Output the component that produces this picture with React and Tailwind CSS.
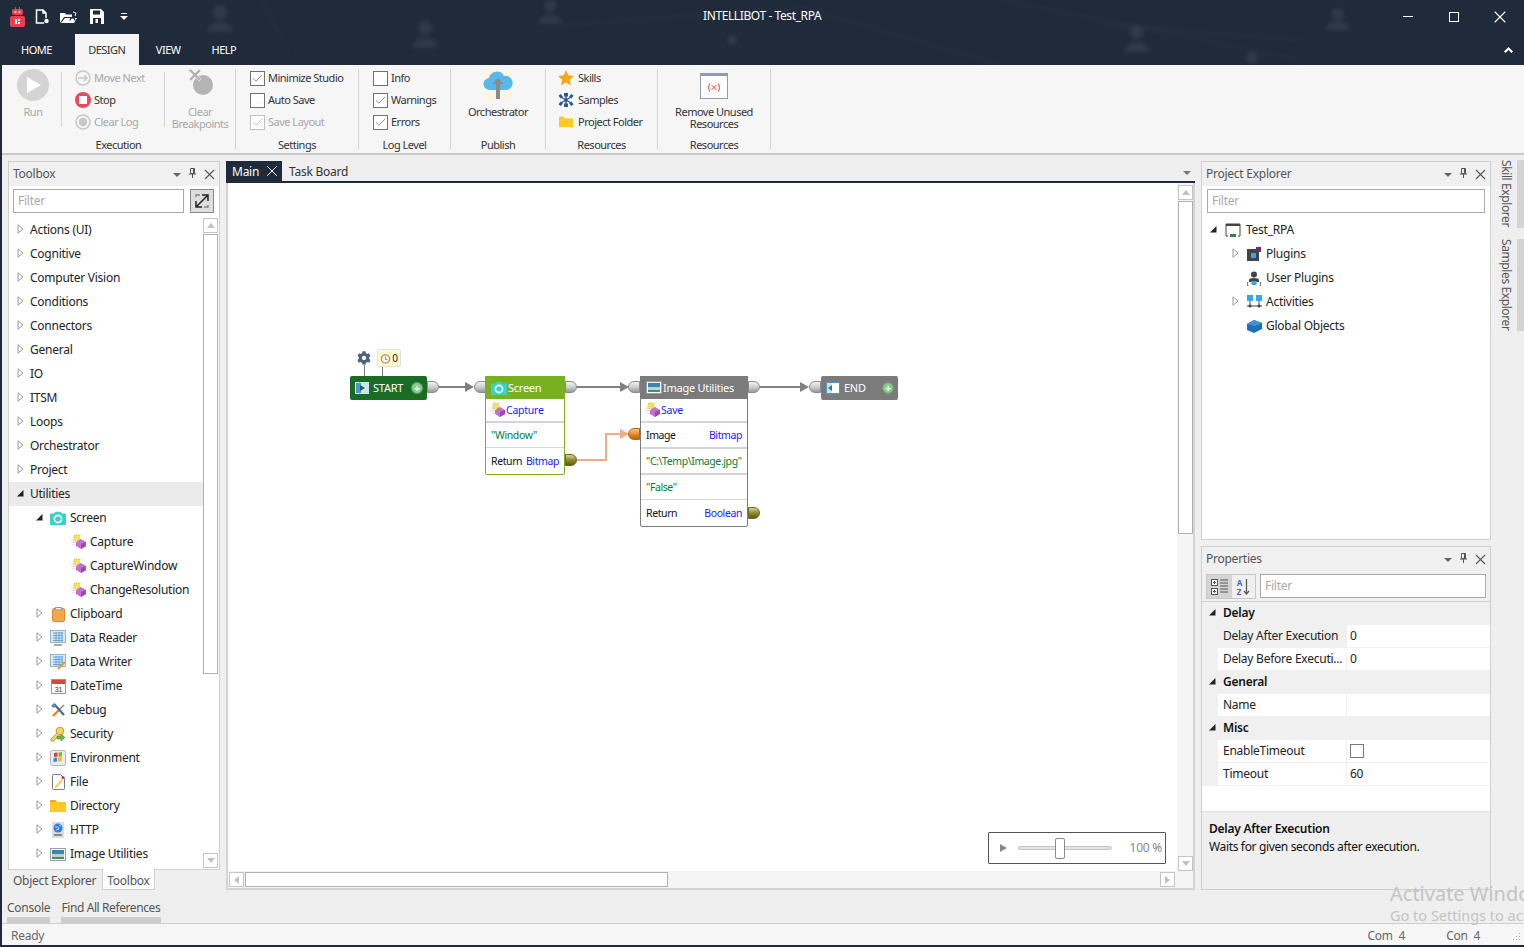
import { Check, X } from "lucide-react";
import { FaCog } from "react-icons/fa";

const TriOpen = () => (
  <svg width="7" height="10" viewBox="0 0 7 10" className="shrink-0 -mt-[2px]">
    <path d="M1 .8 6 5 1 9.2Z" fill="#fff" stroke="#9a9a9a" />
  </svg>
);
const TriDown = () => (
  <svg width="8" height="8" viewBox="0 0 8 8" className="shrink-0 -mt-[2px]">
    <path d="M7.5 1V7.5H1Z" fill="#222" />
  </svg>
);

const Spark = () => (
  <svg width="16" height="16" viewBox="0 0 16 16">
    <path d="M0 6h5M0 8.5h5M1 11h5" stroke="#ddd" />
    <rect x="3" y="1" width="6" height="6" fill="#f5df6b" stroke="#e3c43d" strokeDasharray="1 1" />
    <path d="M5 8 10 5l5 3v4l-5 3-5-3Z" fill="#c46fd0" />
    <path d="M10 10l5-2v4l-5 3Z" fill="#9b4bac" />
  </svg>
);
const ScreenIcon = ({ s = 16 }) => (
  <svg width={s} height={s * 0.875} viewBox="0 0 16 14">
    <path d="M1 2.5h3L5.5.7h5L12 2.5h3a1 1 0 0 1 1 1V13a1 1 0 0 1-1 1H1a1 1 0 0 1-1-1V3.500a1 1 0 0 1 1-1Z" fill="#3bd0c8" />
    <circle cx="8" cy="8" r="3.600" fill="none" stroke="#fff" strokeWidth="1.600" />
  </svg>
);
const ImageIcon = () => (
  <svg width="16" height="13" viewBox="0 0 16 13">
    <rect x=".5" y=".5" width="15" height="12" fill="#fff" stroke="#8ea0b0" />
    <rect x="2" y="2" width="12" height="4" fill="#3d83b5" />
    <rect x="2" y="6" width="12" height="3" fill="#b7d5c8" />
    <rect x="2" y="9" width="12" height="2" fill="#4c8a68" />
  </svg>
);
const Clipboard = () => (
  <svg width="13" height="15" viewBox="0 0 13 15">
    <rect x=".5" y="1.500" width="12" height="13" rx="1.500" fill="#f3a64a" stroke="#d98a2c" />
    <rect x="3.500" y=".5" width="6" height="2.500" fill="#eee" stroke="#999" />
  </svg>
);
const Grid = ({ pen }) => (
  <svg width="16" height="16" viewBox="0 0 16 16">
    <rect x=".5" y=".5" width="15" height="12" fill="#d8e8f4" stroke="#9fb2c2" />
    <path d="M3 3h10M3 5.500h10M3 8h10M3 10.500h10M6 2v10M9 2v10M12 2v10" stroke="#5ba0d8" strokeWidth=".9" />
    {pen ? <path d="M8 15l7-7" stroke="#e0a020" strokeWidth="2" /> : <path d="M4 15h8" stroke="#aaa" strokeWidth="2" />}
  </svg>
);
const Cal = () => (
  <svg width="15" height="16" viewBox="0 0 15 16">
    <rect x=".5" y="1.500" width="14" height="14" fill="#fff" stroke="#999" />
    <rect x="1" y="2" width="13" height="4" fill="#d9463a" />
    <text x="7.500" y="13.500" fontSize="7" textAnchor="middle" fill="#333" fontFamily="Liberation Sans">31</text>
  </svg>
);
const Tools = () => (
  <svg width="15" height="15" viewBox="0 0 15 15">
    <path d="M2 13 9 6" stroke="#e08a1f" strokeWidth="2.400" />
    <path d="M9 6 13 2" stroke="#888" strokeWidth="1.400" />
    <path d="M3 1 13 12" stroke="#4b6a88" strokeWidth="2.200" />
    <path d="M0 3 3 0l2 3-2 2Z" fill="#6a86a0" />
  </svg>
);
const Keys = () => (
  <svg width="16" height="16" viewBox="0 0 16 16">
    <circle cx="10" cy="5" r="3.800" fill="#f2d36b" stroke="#c79a2e" />
    <path d="M7 7 1 13v2h3l1-2 2-1 2-2" fill="#f2d36b" stroke="#c79a2e" />
    <path d="M7 10h4V8l4 3.500L11 15v-2H7Z" fill="#6eb04a" stroke="#4a8a30" strokeWidth=".6" />
  </svg>
);
const Env = () => (
  <svg width="16" height="16" viewBox="0 0 16 16">
    <rect x=".5" y=".5" width="15" height="15" rx="2" fill="#e8ebef" stroke="#b5b5b5" />
    <path d="M4 3l3.500-.5v4L4 7Z" fill="#e33b2e" />
    <path d="M8.500 2.500 12 2v4.500l-3.500.3Z" fill="#7cbb2e" />
    <path d="M3.500 8 7 7.500v4L3.500 12Z" fill="#2f85e0" />
    <path d="M8 7.500l3.800-.3V11L8 11.500Z" fill="#f4b81f" />
  </svg>
);
const FileI = () => (
  <svg width="13" height="16" viewBox="0 0 13 16">
    <path d="M1.500.5h7l4 4v10a1 1 0 0 1-1 1h-10a1 1 0 0 1-1-1v-13a1 1 0 0 1 1-1Z" fill="#fff" stroke="#777" />
    <path d="M3 12.500 9.500 5l1.500 1.300-6.500 7.500L3 14Z" fill="#f4d03f" />
    <circle cx="11" cy="3.500" r="1.500" fill="#c2297c" />
  </svg>
);
const Dir = () => (
  <svg width="16" height="12" viewBox="0 0 16 12">
    <path d="M0 1a1 1 0 0 1 1-1h4l2 2h9v10H0Z" fill="#ffc91f" />
    <path d="M0 1a1 1 0 0 1 1-1h4l2 2H0Z" fill="#eda52a" />
  </svg>
);
const Http = () => (
  <svg width="12" height="16" viewBox="0 0 12 16">
    <rect width="12" height="16" fill="#dcdcdc" />
    <circle cx="6" cy="6" r="4.500" fill="#2f7fe0" />
    <path d="M3 5h3l1 2-3 1M7 3l2 1" stroke="#bcdcff" fill="none" />
    <rect x="2" y="12" width="8" height="2" fill="#888" />
  </svg>
);

const treeItems = [
  ["Actions (UI)"], ["Cognitive"], ["Computer Vision"], ["Conditions"], ["Connectors"], ["General"], ["IO"], ["ITSM"],
  ["Loops"], ["Orchestrator"], ["Project"],
];
const subItems = [
  ["Clipboard", <Clipboard />], ["Data Reader", <Grid />], ["Data Writer", <Grid pen />], ["DateTime", <Cal />],
  ["Debug", <Tools />], ["Security", <Keys />], ["Environment", <Env />], ["File", <FileI />], ["Directory", <Dir />],
  ["HTTP", <Http />], ["Image Utilities", <ImageIcon />],
];

const PanelHeader = ({ title }) => (
  <div className="h-[24px] shrink-0 flex items-center bg-[#f0f0f0] pl-[4px] text-[#555]">
    <span className="whitespace-nowrap">{title}</span>
    <div className="flex-1 h-[5px] mx-[9px] bg-[radial-gradient(#a8a8a8_0.6px,transparent_0.7px)] bg-[length:2px_2px]"></div>
    <svg width="8" height="4" viewBox="0 0 8 4" className="mr-[8px] mt-[2px]"><path d="M0 0h8L4 4Z" fill="#666" /></svg>
    <svg width="7" height="10" viewBox="0 0 7 10" className="-mt-[2px]" fill="none" stroke="#555"><path d="M1.500.5h4v5h-4ZM0 6h7M3.500 6v4M4.500 1v4" /></svg>
    <X size={17} className="text-[#555] ml-[5px] mr-[1px]" strokeWidth={1.5} />
  </div>
);

const Filter = ({ className }) => (
  <div className={"h-[24px] flex items-center bg-white border border-[#a9a9a9] pl-[4px] text-[#aaa] " + (className || "")}>Filter</div>
);

const ScrollBtn = ({ dir }) => {
  const p = { up: "M1 6 5 1l4 5Z", down: "M1 1h8L5 6Z", left: "M6 1v8L1 5Z", right: "M1 1v8l5-4Z" }[dir];
  return (
    <div className="w-[15px] h-[15px] shrink-0 border border-[#c4c4c4] bg-white flex items-center justify-center">
      <svg width="10" height="10" viewBox="0 0 10 10" className={dir === "up" || dir === "down" ? "mt-[2px]" : "ml-[2px]"}><path d={p} fill="#c0c0c0" /></svg>
    </div>
  );
};

const TreeRow = ({ indent, arrow, icon, children, active }) => (
  <div className={"h-[24px] flex items-center shrink-0 whitespace-nowrap text-[#222] " + (active ? "bg-[#ebebeb]" : "")}>
    <div className="flex items-center justify-center w-[8px] shrink-0" style={{ marginLeft: indent }}>{arrow}</div>
    {icon}
    <span>{children}</span>
  </div>
);

const Check14 = ({ checked, dim }) => (
  <div className={"w-[15px] h-[15px] shrink-0 border bg-white flex items-center justify-center " + (dim ? "border-[#c0c0c0]" : "border-[#707070]")}>
    {checked && <Check size={13} strokeWidth={1.4} className={dim ? "text-[#aaa]" : "text-[#666]"} />}
  </div>
);

const CheckRow = ({ label, checked, dim }) => (
  <div className="h-[18px] flex items-center gap-[3px] whitespace-nowrap">
    <Check14 checked={checked} dim={dim} />
    <span className={dim ? "text-[#a8a8a8]" : "text-[#333]"}>{label}</span>
  </div>
);

const Group = ({ w, label, className, children }) => (
  <div className="flex flex-col h-[80px] border-r border-[#d4d4d4] shrink-0" style={{ width: w }}>
    <div className={"h-[69px] " + (className || "")}>{children}</div>
    <div className="h-[11px] leading-[14px] text-center text-[#333]">{label}</div>
  </div>
);

const Pill = ({ side, tone = "gray" }) => {
  const bg = {
    gray: "from-[#f2f2f2] via-[#cfcfcf] to-[#9a9a9a] border-[#8a8a8a]",
    olive: "from-[#d8d39a] via-[#8f8a2c] to-[#5e5a14] border-[#6b6720]",
    orange: "from-[#f7c78f] via-[#ea8a20] to-[#b86510] border-[#b86510]",
  }[tone];
  return <div className={"w-[12px] h-[12px] border bg-gradient-to-b " + bg + (side === "r" ? " rounded-r-[6px]" : " rounded-l-[6px]")}></div>;
};

const Arrow = ({ color = "#808080" }) => (
  <svg width="9" height="10" viewBox="0 0 9 10"><path d="M0 0l9 5-9 5Z" fill={color} /></svg>
);

const Link = ({ w }) => (
  <div className="flex items-center h-[12px]">
    <div className="h-[2px] bg-[#808080]" style={{ width: w }}></div>
    <Arrow />
  </div>
);

const NodeRow = ({ h, left, right, thick, color = "text-[#111]" }) => (
  <div className={"flex items-center justify-between px-[5px] whitespace-nowrap text-[10.5px] tracking-[-0.4px] border-t " + (thick ? "border-t-2 border-[#d4d4d4] " : "border-[#d8d8d8] ") + color} style={{ height: h }}>
    <span>{left}</span>
    {right && <span className="text-[#1a1aff]">{right}</span>}
  </div>
);

const PlusDot = () => (
  <div className="w-[12px] h-[12px] rounded-full bg-[#8cc98c] border border-[#5da05d] flex items-center justify-center text-white font-bold text-[10px] leading-none">+</div>
);

const PropGroup = ({ children }) => (
  <div className="h-[23px] flex items-center bg-[#f0f0f0] font-semibold text-[#111] pb-[2px]">
    <div className="w-[21px] pl-[6px] flex items-center"><TriDown /></div>
    {children}
  </div>
);
const PropRow = ({ label, value, selected }) => (
  <div className="h-[23px] flex bg-[#f0f0f0] text-[#222]">
    <div className={"w-[128px] ml-[16px] pl-[5px] flex items-center whitespace-nowrap overflow-hidden border-b border-[#f0f0f0] " + (selected ? "" : "bg-white")}>{label}</div>
    <div className="flex-1 ml-[1px] pl-[3px] bg-white flex items-center border-b border-[#f0f0f0]">{value}</div>
  </div>
);

const App = () => {
  return (
    <div className="relative w-[1524px] h-[947px] flex flex-col overflow-hidden bg-[#efefef] border-l-2 border-b-2 border-[#1f2a3a] text-[12px] leading-[16px] font-['Noto_Sans','Liberation_Sans',sans-serif] tracking-[-0.25px]">
      {/* title bar */}
      <div className="relative h-[65px] shrink-0 bg-[#1f2a3a] text-white overflow-hidden">
        <svg width="1524" height="65" className="absolute left-0 top-0 blur-[2px]" fill="#3a4656" stroke="none">
          <path d="M260 0 290 65M560 25 800 8M800 8 1000 65M1000 0 1300 60M1300 40 1100 25" stroke="#2c3a4c" strokeWidth="1" fill="none" />
          <g opacity=".6">
            <circle cx="218" cy="12" r="7" /><path d="M205 32q2-10 13-10t13 10Z" />
            <circle cx="423" cy="28" r="7" /><path d="M410 48q2-10 13-10t13 10Z" />
            <circle cx="548" cy="6" r="6" /><path d="M536 24q2-9 12-9t12 9Z" />
            <circle cx="1135" cy="32" r="7" /><path d="M1122 52q2-10 13-10t13 10Z" />
            <circle cx="1336" cy="14" r="6" /><path d="M1324 30q2-9 12-9t12 9Z" />
            <circle cx="730" cy="40" r="5" /><circle cx="1250" cy="58" r="6" />
          </g>
        </svg>
        <div className="relative flex items-center h-[33px] pl-[8px]">
          <svg width="15" height="21" viewBox="0 0 15 21" className="-mt-[1px]">
            <path d="M5 1h1v2H5ZM9 1h1v2H9Z" fill="#e8404f" />
            <rect x="2" y="3" width="11" height="6" rx="2" fill="#e8404f" />
            <circle cx="5.500" cy="6" r="1" fill="#fff" /><circle cx="9.500" cy="6" r="1" fill="#fff" />
            <rect x="0" y="10" width="15" height="11" rx="2" fill="#e8404f" />
            <path d="M5 13h2v5H5ZM8 13h2v2H8ZM8 16h2v2H8Z" fill="#fff" />
          </svg>
          <svg width="15" height="16" viewBox="0 0 15 16" className="ml-[10px]" fill="none" stroke="#fff" strokeWidth="1.500">
            <path d="M9 14H1.500V1H8l3 3v5M8 1v3h3" /><circle cx="11.500" cy="12" r="2.200" fill="#fff" strokeWidth="0" />
          </svg>
          <svg width="18" height="14" viewBox="0 0 18 14" className="ml-[10px]">
            <path d="M0 13V3h5l1 1.500h6V7H4L0 13Z" fill="#fff" /><path d="M5 8h12l-3 5H1Z" fill="#fff" />
            <path d="M10 10.500a2.500 2.500 0 0 1 5 0" stroke="#1f2a3a" strokeWidth="1.200" fill="none" />
            <path d="M13 2l3 1-1 3" stroke="#fff" fill="none" />
          </svg>
          <svg width="14" height="15" viewBox="0 0 14 15" className="ml-[12px]">
            <path d="M0 0h11l3 3v12H0Z" fill="#fff" />
            <rect x="3" y="1.500" width="7" height="4" fill="#1f2a3a" /><rect x="3" y="9" width="8" height="6" fill="#1f2a3a" /><rect x="5.500" y="10" width="2.500" height="4" fill="#fff" />
          </svg>
          <svg width="8" height="7" viewBox="0 0 8 7" className="ml-[16px]"><path d="M1 0h6v1H1ZM0 3h8L4 7Z" fill="#fff" /></svg>
          <div className="absolute left-[701px] top-[8px] whitespace-nowrap tracking-[-0.4px]">INTELLIBOT - Test_RPA</div>
          <div className="ml-auto flex items-center pr-[14px]">
            <div className="w-[10px] h-[1px] bg-white"></div>
            <div className="w-[10px] h-[10px] border border-white ml-[36px]"></div>
            <X size={20} strokeWidth={1.3} className="ml-[31px]" />
          </div>
        </div>
        <div className="relative flex items-end h-[32px] pl-[19px] text-[11px] tracking-[-0.5px]">
          <div className="h-[31px] flex items-center">HOME</div>
          <div className="h-[31px] w-[64px] ml-[23px] flex items-center justify-center bg-[#f5f5f5] text-[#333]">DESIGN</div>
          <div className="h-[31px] flex items-center ml-[17px]">VIEW</div>
          <div className="h-[31px] flex items-center ml-[31px]">HELP</div>
          <svg width="9" height="6" viewBox="0 0 9 6" className="ml-auto mr-[11px] mb-[12px]"><path d="M0 4.500 4.500 0 9 4.500 7.500 6 4.500 3 1.500 6Z" fill="#fff" /></svg>
        </div>
      </div>

      {/* ribbon */}
      <div className="h-[90px] shrink-0 bg-[#f6f6f6] border-b-2 border-[#c8c8c8] pt-[4px] flex text-[11px] tracking-[-0.5px]">
        <Group w={234} label="Execution" className="flex">
          <div className="w-[59px] flex flex-col items-center pl-[3px]">
            <div className="w-[32px] h-[32px] rounded-full bg-[#d4d4d4] flex items-center justify-center">
              <svg width="14" height="16" viewBox="0 0 14 16" className="ml-[2px]"><path d="M0 0l14 8-14 8Z" fill="#fff" /></svg>
            </div>
            <div className="mt-[3px] text-[#a8a8a8]">Run</div>
          </div>
          <div className="w-[1px] h-[55px] bg-[#d4d4d4] mt-[3px]"></div>
          <div className="w-[102px] pl-[13px] flex flex-col gap-[4px]">
            <div className="h-[18px] flex items-center gap-[3px] text-[#a8a8a8] whitespace-nowrap">
              <svg width="16" height="16" viewBox="0 0 16 16" fill="none" stroke="#c8c8c8" strokeWidth="1.500"><circle cx="8" cy="8" r="7" /><path d="M3 8h9M9 5l3 3-3 3" /></svg>Move Next
            </div>
            <div className="h-[18px] flex items-center gap-[3px] text-[#333]">
              <div className="w-[16px] h-[16px] rounded-full bg-[#e84a60] flex items-center justify-center"><div className="w-[8px] h-[8px] bg-white"></div></div>Stop
            </div>
            <div className="h-[18px] flex items-center gap-[3px] text-[#a8a8a8] whitespace-nowrap">
              <svg width="16" height="16" viewBox="0 0 16 16" fill="none" stroke="#c8c8c8" strokeWidth="1.500"><circle cx="8" cy="8" r="7" /><circle cx="8" cy="8" r="3.500" fill="#c8c8c8" /></svg>Clear Log
            </div>
          </div>
          <div className="w-[1px] h-[55px] bg-[#d4d4d4] mt-[3px]"></div>
          <div className="flex-1 flex flex-col items-center text-[#a8a8a8] text-center leading-[12px]">
            <svg width="28" height="28" viewBox="0 0 28 28" className="-mt-[1px] mb-[10px]">
              <circle cx="17" cy="17" r="10" fill="#b4b4b4" />
              <path d="M2 2l3-1 4 4 4-4 2 2-4 4 4 4-2 2-4-4-4 4-2-2 4-4-4-4Z" fill="#b4b4b4" stroke="#f6f6f6" strokeWidth=".6" />
            </svg>
            <div>Clear</div><div>Breakpoints</div>
          </div>
        </Group>
        <Group w={123} label="Settings" className="pl-[14px] flex flex-col gap-[4px]">
          <CheckRow label="Minimize Studio" checked />
          <CheckRow label="Auto Save" />
          <CheckRow label="Save Layout" checked dim />
        </Group>
        <Group w={92} label="Log Level" className="pl-[14px] flex flex-col gap-[4px]">
          <CheckRow label="Info" />
          <CheckRow label="Warnings" checked />
          <CheckRow label="Errors" checked />
        </Group>
        <Group w={95} label="Publish" className="flex flex-col items-center">
          <svg width="30" height="33" viewBox="0 0 30 33" className="-mt-[1px]">
            <rect x="1" y="1" width="28" height="31" fill="#fdf6df" opacity=".8" />
            <path d="M7 22a6 6 0 0 1-1-12 8 8 0 0 1 15-2 7 7 0 0 1 3 14Z" fill="#58b8ec" />
            <path d="M15 10l6 6h-4v15h-4V16H9Z" fill="#8a8a8a" />
          </svg>
          <div className="mt-[3px] text-[#333]">Orchestrator</div>
        </Group>
        <Group w={112} label="Resources" className="pl-[12px] flex flex-col gap-[4px] text-[#333] whitespace-nowrap">
          <div className="h-[18px] flex items-center gap-[4px]">
            <svg width="16" height="16" viewBox="0 0 16 16"><path d="M8 0l2.400 5.200 5.600.7-4.100 3.900 1.100 5.600L8 12.600 3 15.400l1.100-5.600L0 5.900l5.600-.7Z" fill="#f6a81c" /></svg>Skills
          </div>
          <div className="h-[18px] flex items-center gap-[4px]">
            <svg width="16" height="16" viewBox="0 0 16 16" fill="#2a5a9a">
              <path d="M8 1v14M2 4.500l12 7M14 4.500l-12 7" stroke="#2a5a9a" strokeWidth="1.400" />
              <circle cx="8" cy="8" r="1.800" />
              <path d="M6 1h4v3.500H6ZM6 11.500h4V15H6ZM.5 3.500 3 2l2 3-2.500 1.500ZM13 2l2.500 1.500-2 3L11 5ZM.5 12.500 3 14l2-3-2.500-1.500ZM13 14l2.500-1.500-2-3L11 11Z" />
            </svg>Samples
          </div>
          <div className="h-[18px] flex items-center gap-[5px] pl-[1px]">
            <svg width="14" height="12" viewBox="0 0 16 12"><path d="M0 1a1 1 0 0 1 1-1h4l2 2h9v10H0Z" fill="#ffc91f" /></svg>Project Folder
          </div>
        </Group>
        <Group w={113} label="Resources" className="flex flex-col items-center text-[#333] leading-[12px] text-center">
          <div className="w-[28px] h-[26px] mt-[4px] border border-[#8e9cab] bg-white border-t-[3px] flex items-center justify-center">
            <svg width="14" height="9" viewBox="0 0 14 9" fill="none" stroke="#e0443a"><path d="M2.500 .5Q.5 4.500 2.500 8.500M11.500 .5Q13.500 4.500 11.500 8.500M4.500 2l5 5M9.500 2l-5 5" /></svg>
          </div>
          <div className="mt-[7px]">Remove Unused</div>
          <div>Resources</div>
        </Group>
      </div>

      {/* docked panels */}
      <div className="flex-1 min-h-0 flex pl-[6px] pt-[6px] gap-[6px]">
        <div className="w-[212px] shrink-0 flex flex-col">
          <div className="h-[709px] flex flex-col border border-[#cfcfcf] bg-white">
            <PanelHeader title="Toolbox" />
            <div className="flex gap-[6px] pl-[4px] pt-[3px] pb-[5px]">
              <Filter className="w-[171px]" />
              <div className="w-[24px] h-[24px] bg-[#dedede] border border-[#8a8a8a] flex items-center justify-center">
                <svg width="18" height="18" viewBox="0 0 18 18" fill="none" stroke="#222" strokeWidth="1.500"><path d="M4 14 14 4M9 3h6v6M3 9v6h6" /><path d="M3 5V3h4M15 13v2h-4" stroke="#888" /></svg>
              </div>
            </div>
            <div className="flex-1 min-h-0 flex">
              <div className="w-[194px] overflow-hidden">
                {treeItems.map((t) => (
                  <TreeRow key={t[0]} indent={7} arrow={<TriOpen />}><span className="ml-[6px]">{t[0]}</span></TreeRow>
                ))}
                <TreeRow indent={7} active arrow={<TriDown />}><span className="ml-[6px]">Utilities</span></TreeRow>
                <TreeRow indent={26} arrow={<TriDown />} icon={<span className="ml-[7px] mr-[4px]"><ScreenIcon /></span>}>Screen</TreeRow>
                {["Capture", "CaptureWindow", "ChangeResolution"].map((t) => (
                  <div key={t} className="h-[24px] flex items-center pl-[62px] gap-[3px] text-[#222] whitespace-nowrap"><Spark />{t}</div>
                ))}
                {subItems.map(([t, ic]) => (
                  <TreeRow key={t} indent={26} arrow={<TriOpen />} icon={<span className="ml-[7px] mr-[4px] w-[16px] flex justify-center">{ic}</span>}>{t}</TreeRow>
                ))}
              </div>
              <div className="flex-1 flex flex-col items-start pb-[1px]">
                <ScrollBtn dir="up" />
                <div className="w-[15px] h-[440px] border border-[#b0b0b0] mt-[1px] bg-white"></div>
                <div className="flex-1"></div>
                <ScrollBtn dir="down" />
              </div>
            </div>
          </div>
          <div className="h-[20px] flex text-[#555]">
            <div className="w-[94px] pl-[5px] pt-[1px] flex items-center whitespace-nowrap">Object Explorer</div>
            <div className="w-[53px] h-[21px] pt-[3px] bg-white border-x border-b border-[#cfcfcf] flex items-center justify-center -mt-[1px]">Toolbox</div>
          </div>
        </div>

        <div className="w-[969px] shrink-0 h-[729px] flex flex-col">
          <div className="h-[20px] shrink-0 flex items-center text-[#333] pt-[0px]">
            <div className="h-[20px] w-[56px] bg-[#1f2a3a] text-white flex items-center pl-[6px] pt-[2px] justify-between pr-[1px]">Main<X size={18} strokeWidth={1.3} className="-mt-[2px]" /></div>
            <div className="ml-[7px] pt-[2px]">Task Board</div>
            <svg width="8" height="4" viewBox="0 0 8 4" className="ml-auto mr-[4px] mt-[3px]"><path d="M0 0h8L4 4Z" fill="#777" /></svg>
          </div>
          <div className="h-[2px] shrink-0 bg-[#1f2a3a]"></div>
          <div className="flex-1 min-h-0 flex flex-col border-x-2 border-b-2 border-[#d4d4d4]">
            <div className="flex-1 min-h-0 flex">
              <div className="relative flex-1 bg-white overflow-hidden">
                {/* diagram, canvas offset is 228,183 */}
                <FaCog size={14} color="#4a6478" className="absolute left-[129px] top-[168px]" />
                <div className="absolute left-[136px] top-[182px] w-[1px] h-[12px] bg-[#777]"></div>
                <div className="absolute left-[149px] top-[166px] w-[24px] h-[18px] bg-[#fffbd2] border border-[#e2e2d0] rounded-[2px] flex items-center justify-center gap-[1px] text-[10px] text-[#222]">
                  <svg width="11" height="11" viewBox="0 0 12 12"><circle cx="6" cy="6.500" r="4.500" fill="#fff" stroke="#c9844e" strokeWidth="1.500" /><path d="M6 4v3h2" stroke="#777" fill="none" /></svg>0
                </div>
                <div className="absolute left-[154px] top-[184px] w-[1px] h-[10px] bg-[#777]"></div>

                <div className="absolute left-[122px] top-[193px] flex items-start">
                  <div className="w-[77px] h-[24px] bg-[#1a6b23] rounded-[2px] flex items-center pl-[5px] pr-[4px] text-white text-[11px] gap-[4px]">
                    <svg width="14" height="12" viewBox="0 0 14 12"><rect width="14" height="12" fill="#cfe3f5" /><rect x="1" y="1" width="5" height="10" fill="#4d97d8" /><path d="M5 3l5 3-5 3Z" fill="#1a6b23" /></svg>
                    START
                    <div className="ml-auto"><PlusDot /></div>
                  </div>
                  <div className="mt-[5px] flex items-center"><Pill side="r" /><Link w={26} /><Pill side="l" /></div>
                </div>

                <div className="absolute left-[257px] top-[193px] w-[80px] h-[99px] bg-white border border-[#78b01f] rounded-[2px]">
                  <div className="h-[23px] -mx-[1px] -mt-[1px] bg-[#78b01f] flex items-center pl-[6px] gap-[1px] text-white text-[11px]"><ScreenIcon />Screen</div>
                  <div className="h-[22px] flex items-center pl-[4px] text-[#1a1aff] text-[10.5px]"><Spark />Capture</div>
                  <NodeRow h={26} left={'"Window"'} thick color="text-[#0a7a3a]" />
                  <NodeRow h={26} left="Return" right="Bitmap" />
                </div>
                <div className="absolute left-[337px] top-[198px] flex items-center"><Pill side="r" /><Link w={43} /></div>
                <div className="absolute left-[400px] top-[198px]"><Pill side="l" /></div>

                <div className="absolute left-[337px] top-[271px]"><Pill side="r" tone="olive" /></div>
                <div className="absolute left-[349px] top-[276px] w-[29px] h-[2px] bg-[#f4ab84]"></div>
                <div className="absolute left-[377px] top-[251px] w-[2px] h-[27px] bg-[#f4ab84]"></div>
                <div className="absolute left-[377px] top-[250px] w-[16px] h-[2px] bg-[#f4ab84]"></div>
                <div className="absolute left-[392px] top-[246px]"><Arrow color="#f4ab84" /></div>
                <div className="absolute left-[400px] top-[245px]"><Pill side="l" tone="orange" /></div>

                <div className="absolute left-[412px] top-[193px] w-[108px] h-[151px] bg-white border border-[#7b7b7b] rounded-[2px]">
                  <div className="h-[23px] -mx-[1px] -mt-[1px] bg-[#7b7b7b] flex items-center pl-[6px] gap-[1px] text-white text-[11px] whitespace-nowrap"><ImageIcon />Image Utilities</div>
                  <div className="h-[22px] flex items-center pl-[4px] text-[#1a1aff] text-[10.5px]"><Spark />Save</div>
                  <NodeRow h={26} left="Image" right="Bitmap" thick />
                  <NodeRow h={26} left={'"C:\\Temp\\Image.jpg"'} thick color="text-[#0a7a3a]" />
                  <NodeRow h={26} left={'"False"'} thick color="text-[#0a7a3a]" />
                  <NodeRow h={26} left="Return" right="Boolean" />
                </div>
                <div className="absolute left-[520px] top-[198px] flex items-center"><Pill side="r" /><Link w={40} /><Pill side="l" /></div>
                <div className="absolute left-[520px] top-[324px]"><Pill side="r" tone="olive" /></div>

                <div className="absolute left-[593px] top-[193px] w-[77px] h-[24px] bg-[#7b7b7b] rounded-[2px] flex items-center pl-[5px] pr-[4px] text-white text-[11px] gap-[4px]">
                  <svg width="14" height="12" viewBox="0 0 14 12"><rect width="14" height="12" fill="#4d97d8" /><rect x="6" y="1" width="7" height="10" fill="#fff" /><rect x="1" y="1" width="5" height="10" fill="#cfe3f5" /><path d="M6 3 2 6l4 3Z" fill="#2d8a3e" /></svg>
                  END
                  <div className="ml-auto"><PlusDot /></div>
                </div>

                <div className="absolute left-[760px] top-[649px] w-[178px] h-[32px] bg-white border border-[#555] rounded-[1px] flex items-center pl-[11px] pr-[3px] text-[#888]">
                  <svg width="7" height="8" viewBox="0 0 7 8"><path d="M0 0l7 4-7 4Z" fill="#888" /></svg>
                  <div className="relative w-[94px] h-[4px] ml-[11px] bg-[#e4e4e4] border border-[#c4c4c4] rounded-full">
                    <div className="absolute left-[36px] -top-[9px] w-[10px] h-[21px] bg-white border border-[#888] rounded-[2px]"></div>
                  </div>
                  <span className="ml-auto">100 %</span>
                </div>
              </div>
              <div className="w-[16px] shrink-0 flex flex-col pt-[2px] pl-[1px] bg-[#f5f5f5]">
                <ScrollBtn dir="up" />
                <div className="w-[15px] h-[333px] mt-[1px] border border-[#b0b0b0] bg-white"></div>
                <div className="flex-1"></div>
                <ScrollBtn dir="down" />
              </div>
            </div>
            <div className="h-[17px] shrink-0 flex items-start pl-[1px] pr-[18px] bg-[#f5f5f5] pt-[1px]">
              <ScrollBtn dir="left" />
              <div className="w-[423px] h-[15px] ml-[1px] border border-[#b0b0b0] bg-white"></div>
              <div className="flex-1"></div>
              <ScrollBtn dir="right" />
            </div>
          </div>
        </div>

        <div className="w-[290px] shrink-0 flex flex-col gap-[6px] h-[729px]">
          <div className="h-[379px] border border-[#cfcfcf] bg-white flex flex-col">
            <PanelHeader title="Project Explorer" />
            <div className="px-[5px] pt-[3px]"><Filter /></div>
            <div className="pt-[5px]">
              <TreeRow indent={7} arrow={<TriDown />} icon={<svg width="16" height="14" viewBox="0 0 16 14" className="ml-[8px] mr-[5px]"><path d="M3 13H1V1h14v12h-2" fill="none" stroke="#444" /><rect x="1" y="1" width="14" height="2" fill="#444" /><rect x="5" y="11" width="6" height="3" fill="#2d8a3e" /></svg>}>Test_RPA</TreeRow>
              <TreeRow indent={29} arrow={<TriOpen />} icon={<svg width="14" height="14" viewBox="0 0 14 14" className="ml-[8px] mr-[5px]"><rect y="2" width="12" height="12" fill="#444" /><rect x="4" y="6" width="5" height="5" fill="#3aa6e6" /><path d="M9 0h5v5h-2V2H9Z" fill="#6a2d8f" /></svg>}>Plugins</TreeRow>
              <TreeRow indent={29} icon={<svg width="14" height="15" viewBox="0 0 14 15" className="ml-[8px] mr-[5px]"><circle cx="7" cy="3.500" r="3" fill="#444" /><path d="M2 9q0-2 5-2t5 2v2H2Z" fill="#444" /><rect x="4.500" y="10" width="5" height="4" fill="#3aa6e6" /><path d="M1 11l-1 2 1 2M13 11l1 2-1 2" stroke="#555" fill="none" /></svg>}>User Plugins</TreeRow>
              <TreeRow indent={29} arrow={<TriOpen />} icon={<svg width="15" height="14" viewBox="0 0 15 14" className="ml-[8px] mr-[4px]"><rect width="6" height="6" fill="#3aa6e6" /><rect x="9" width="6" height="6" fill="#3aa6e6" /><path d="M3 6v5M12 6v5M0 11h15" stroke="#444" /><circle cx="3" cy="11" r="1.500" fill="#444" /><circle cx="12" cy="11" r="1.500" fill="#444" /></svg>}>Activities</TreeRow>
              <TreeRow indent={29} icon={<svg width="15" height="13" viewBox="0 0 15 13" className="ml-[8px] mr-[4px]"><path d="M0 4l7-4 8 3v6l-8 4-7-3Z" fill="#1f6fb5" /><path d="M0 4l7-4 8 3-7 3Z" fill="#3d94d8" /></svg>}>Global Objects</TreeRow>
            </div>
          </div>
          <div className="h-[344px] border border-[#cfcfcf] bg-white flex flex-col">
            <PanelHeader title="Properties" />
            <div className="h-[31px] shrink-0 bg-[#f0f0f0] flex items-start pt-[3px] pl-[4px] pr-[4px] gap-[4px] border-b border-[#cfcfcf]">
              <div className="w-[50px] h-[25px] border border-[#c8c8c8] flex bg-[#f0f0f0]">
                <div className="w-[25px] bg-[#d4d4d4] flex items-center justify-center">
                  <svg width="17" height="16" viewBox="0 0 17 16" fill="none" stroke="#555"><rect x=".5" y=".5" width="6" height="6" fill="#fff" /><rect x=".5" y="9.500" width="6" height="6" fill="#fff" /><path d="M2 3.500h3M3.500 2v3M2 12.500h3M3.500 11v3M9 1h8M9 4h8M9 7h8M9 10h8M9 13h8" /></svg>
                </div>
                <div className="flex-1 flex items-center justify-center">
                  <div className="flex flex-col text-[8px] leading-[9px] font-bold text-[#3070c0]"><span>A</span><span className="text-[#8050b0]">Z</span></div>
                  <svg width="7" height="16" viewBox="0 0 7 16" className="ml-[1px]" fill="none" stroke="#555" strokeWidth="1.200"><path d="M3.500 0v15M1 12l2.500 3L6 12" /></svg>
                </div>
              </div>
              <Filter className="flex-1" />
            </div>
            <PropGroup>Delay</PropGroup>
            <PropRow label="Delay After Execution" value="0" selected />
            <PropRow label="Delay Before Executi..." value="0" />
            <PropGroup>General</PropGroup>
            <PropRow label="Name" />
            <PropGroup>Misc</PropGroup>
            <PropRow label="EnableTimeout" value={<div className="w-[14px] h-[14px] border border-[#777] bg-white"></div>} />
            <PropRow label="Timeout" value="60" />
            <div className="flex-1 bg-white"></div>
            <div className="h-[78px] shrink-0 bg-[#efefef] border-t border-[#e0e0e0] px-[7px] pt-[9px] text-[#111]">
              <div className="font-semibold">Delay After Execution</div>
              <div className="mt-[2px] tracking-[-0.35px]">Waits for given seconds after execution.</div>
            </div>
          </div>
        </div>

        <div className="flex-1 flex flex-col items-start text-[#555] -mt-[1px] tracking-[-0.4px]">
          <div className="flex w-full h-[68px]">
            <div className="[writing-mode:vertical-rl] ml-[1px] whitespace-nowrap">Skill Explorer</div>
            <div className="ml-auto mr-0 w-[7px] shrink-0 bg-[#d4d4d4]"></div>
          </div>
          <div className="flex w-full h-[92px] mt-[11px]">
            <div className="[writing-mode:vertical-rl] ml-[1px] whitespace-nowrap">Samples Explorer</div>
            <div className="ml-auto mr-0 w-[7px] shrink-0 bg-[#d4d4d4]"></div>
          </div>
        </div>
      </div>

      {/* bottom tool tabs */}
      <div className="h-[32px] shrink-0 flex items-end pl-[5px] gap-[11px] text-[#555]">
        <div className="flex flex-col"><span className="mb-[1px]">Console</span><div className="h-[6px] bg-[#cccccc]"></div></div>
        <div className="flex flex-col w-[100px] whitespace-nowrap tracking-[-0.4px]"><span className="mb-[1px]">Find All References</span><div className="h-[6px] bg-[#cccccc]"></div></div>
      </div>

      {/* status bar */}
      <div className="h-[22px] shrink-0 bg-[#f6f6f6] border-t border-[#cfcfcf] flex items-center pl-[9px] pt-[3px] text-[#666]">
        <span>Ready</span>
        <span className="ml-auto">Com&nbsp;&nbsp;4</span>
        <span className="ml-[41px]">Con&nbsp;&nbsp;4</span>
        <svg width="10" height="10" viewBox="0 0 10 10" className="ml-[31px] mr-[3px]" fill="#a8a8a8"><rect x="8" y="2" width="1" height="1" /><rect x="5" y="5" width="1" height="1" /><rect x="8" y="5" width="1" height="1" /><rect x="2" y="8" width="1" height="1" /><rect x="5" y="8" width="1" height="1" /><rect x="8" y="8" width="1" height="1" /></svg>
      </div>

      {/* windows watermark */}
      <div className="absolute left-[1388px] top-[880px] text-[#c4c4c4] whitespace-nowrap pointer-events-none tracking-[0px]">
        <div className="text-[20px] leading-[28px]">Activate Windows</div>
        <div className="text-[14.5px] leading-[14px]">Go to Settings to activate Windows.</div>
      </div>
    </div>
  );
};

export default App;
